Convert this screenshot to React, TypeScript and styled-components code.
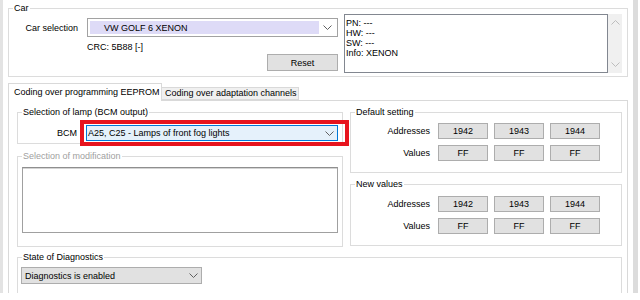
import styled, { createGlobalStyle } from "styled-components";

const GlobalStyle = createGlobalStyle`
  html, body {
    margin: 0;
    padding: 0;
    background: #ffffff;
  }

  body {
    font-family: "Liberation Sans", Arial, sans-serif;
    font-size: 9px;
    color: #000000;
  }

  * {
    box-sizing: border-box;
  }
`;

const Window = styled.div`
  width: 638px;
  height: 293px;
  overflow: hidden;
  padding: 0 5px;
  border-left: 3px solid #e3e3e3;
  border-right: 5px solid #dcdcdc;
  background: #ffffff;
`;

const GroupBox = styled.fieldset`
  margin: 0;
  padding: 0;
  min-width: 0;
  border: 1px solid #dcdcdc;
  border-radius: 0;
`;

const Legend = styled.legend<{ $disabled?: boolean }>`
  margin-left: 4px;
  padding: 0 1px;
  font-size: 9px;
  line-height: 12px;
  color: ${(p) => (p.$disabled ? "#a0a0a0" : "#000000")};
`;

const CarGroup = styled(GroupBox)`
  margin-top: 2px;
`;

const CarBody = styled.div`
  display: flex;
  padding: 0 5px 3px 8px;
`;

const SelectGrid = styled.div`
  display: grid;
  grid-template-columns: 61px 251px;
  column-gap: 9px;
  align-content: start;
  padding-top: 4px;
`;

const FieldLabel = styled.div`
  display: flex;
  align-items: center;
  justify-content: flex-end;
  white-space: nowrap;
`;

const Combo = styled.div<{ $variant: "plain" | "focus" | "button" }>`
  position: relative;
  display: flex;
  align-items: center;
  height: ${(p) => (p.$variant === "plain" ? "19px" : p.$variant === "focus" ? "16px" : "17px")};
  border: 1px solid
    ${(p) => (p.$variant === "focus" ? "#0078d7" : p.$variant === "button" ? "#adadad" : "#a2a2a2")};
  background: ${(p) =>
    p.$variant === "focus" ? "#e5f1fb" : p.$variant === "button" ? "#e1e1e1" : "#ffffff"};
  padding: ${(p) => (p.$variant === "plain" ? "2px" : "0")};
`;

const ComboText = styled.div<{ $indent: number; $fill?: string }>`
  flex: 1;
  height: 100%;
  display: flex;
  align-items: center;
  padding-left: ${(p) => p.$indent}px;
  background: ${(p) => p.$fill || "transparent"};
  white-space: nowrap;
  overflow: hidden;
`;

const ChevronBox = styled.div`
  width: 16px;
  flex: none;
  display: flex;
  align-items: center;
  justify-content: center;
`;

// red annotation frame drawn over the BCM combo
const Highlighted = styled.div`
  position: relative;

  &::after {
    content: "";
    position: absolute;
    left: -6px;
    right: -11px;
    top: -5px;
    bottom: -5px;
    border: 4px solid #e7141e;
    pointer-events: none;
  }
`;

const Crc = styled.div`
  grid-column: 2;
  margin-top: 5px;
  line-height: 10px;
`;

const ResetButton = styled.button`
  grid-column: 2;
  justify-self: end;
  margin-top: 2px;
  width: 71px;
  height: 17px;
  padding: 0;
  border: 1px solid #adadad;
  background: #e1e1e1;
  font-family: inherit;
  font-size: 9px;
  color: #000000;
`;

const InfoBox = styled.div`
  display: flex;
  margin-left: 6px;
  width: 278px;
  height: 59px;
`;

const InfoText = styled.div`
  flex: 1;
  border: 1px solid #828790;
  padding: 3px 1px 2px;
  line-height: 10px;
`;

const ScrollBar = styled.div`
  width: 14px;
  background: #f0f0f0;
  display: flex;
  flex-direction: column;
  justify-content: space-between;
  align-items: center;
  padding: 6px 0 6px;
`;

const Tabs = styled.div`
  margin-top: 6px;
`;

const TabBar = styled.div`
  display: flex;
  align-items: flex-end;
  height: 17px;
`;

const Tab = styled.div<{ $active?: boolean; $width: number }>`
  position: relative;
  z-index: ${(p) => (p.$active ? 1 : 0)};
  width: ${(p) => p.$width}px;
  height: ${(p) => (p.$active ? "18px" : "13px")};
  margin-bottom: ${(p) => (p.$active ? "-1px" : "0")};
  padding: ${(p) => (p.$active ? "2px 0 0 5px" : "0 0 0 3px")};
  line-height: ${(p) => (p.$active ? "12px" : "11px")};
  border: 1px solid #d9d9d9;
  border-bottom: ${(p) => (p.$active ? "none" : "1px solid #d9d9d9")};
  border-left: ${(p) => (p.$active ? "1px solid #d9d9d9" : "none")};
  background: ${(p) => (p.$active ? "#ffffff" : "#f0f0f0")};
  white-space: nowrap;
`;

const Panel = styled.div`
  border: 1px solid #d9d9d9;
  background: #ffffff;
  padding: 5px 5px 0 8px;
  height: 200px;
`;

const Columns = styled.div`
  display: grid;
  grid-template-columns: 326px 272px;
  column-gap: 7px;
  align-items: start;
`;

const Column = styled.div<{ $gap: number }>`
  display: flex;
  flex-direction: column;
  gap: ${(p) => p.$gap}px;
`;

const LampRow = styled.div`
  display: grid;
  grid-template-columns: 51px 252px;
  column-gap: 9px;
  padding: 7px 4px 2px 8px;
`;

const ListArea = styled.div`
  margin: 5px 4px 13px 4px;
  height: 66px;
  border: 1px solid #a0a0a0;
  border-top-color: #8f8f8f;
  box-shadow: inset 0 1px 0 #d4d4d4;
  background: #ffffff;
`;

const ValueGrid = styled.div<{ $top: number }>`
  display: grid;
  grid-template-columns: 73px 50px 50px 50px;
  grid-auto-rows: 16px;
  column-gap: 6px;
  row-gap: 6px;
  padding: ${(p) => p.$top}px 0 11px 8px;
`;

const ValueLabel = styled.div`
  display: flex;
  align-items: center;
  justify-content: flex-end;
  padding-right: 2px;
`;

const CellButton = styled.div`
  display: flex;
  align-items: center;
  justify-content: center;
  border: 1px solid #adadad;
  background: #e1e1e1;
`;

const StateGroup = styled(GroupBox)`
  margin-top: 4px;
`;

const StateBody = styled.div`
  padding: 4px 0 20px 3px;
  width: 184px;
`;

function Chevron({ up, color = "#606060" }: { up?: boolean; color?: string }) {
  return (
    <svg width="9" height="5" viewBox="0 0 9 5">
      <path
        d={up ? "M0.5 4.5 L4.5 0.5 L8.5 4.5" : "M0.5 0.5 L4.5 4.5 L8.5 0.5"}
        fill="none"
        stroke={color}
        strokeWidth="1"
      />
    </svg>
  );
}

function ValueBlock({ top, values }: { top: number; values: string[] }) {
  return (
    <ValueGrid $top={top}>
      <ValueLabel>Addresses</ValueLabel>
      <CellButton>1942</CellButton>
      <CellButton>1943</CellButton>
      <CellButton>1944</CellButton>
      <ValueLabel>Values</ValueLabel>
      {values.map((v, i) => (
        <CellButton key={i}>{v}</CellButton>
      ))}
    </ValueGrid>
  );
}

export default function App() {
  return (
    <>
      <GlobalStyle />
      <Window>
        <CarGroup>
          <Legend>Car</Legend>
          <CarBody>
            <SelectGrid>
              <FieldLabel>Car selection</FieldLabel>
              <Combo $variant="plain">
                <ComboText $indent={14} $fill="#dedbf7">
                  VW GOLF 6 XENON
                </ComboText>
                <ChevronBox>
                  <Chevron />
                </ChevronBox>
              </Combo>
              <Crc>CRC: 5B88 [-]</Crc>
              <ResetButton>Reset</ResetButton>
            </SelectGrid>
            <InfoBox>
              <InfoText>
                <div>PN: ---</div>
                <div>HW: ---</div>
                <div>SW: ---</div>
                <div>Info: XENON</div>
              </InfoText>
              <ScrollBar>
                <Chevron up color="#bdbdbd" />
                <Chevron color="#bdbdbd" />
              </ScrollBar>
            </InfoBox>
          </CarBody>
        </CarGroup>

        <Tabs>
          <TabBar>
            <Tab $active $width={154}>
              Coding over programming EEPROM
            </Tab>
            <Tab $width={137}>Coding over adaptation channels</Tab>
          </TabBar>
          <Panel>
            <Columns>
              <Column $gap={6}>
                <GroupBox>
                  <Legend>Selection of lamp (BCM output)</Legend>
                  <LampRow>
                    <FieldLabel>BCM</FieldLabel>
                    <Highlighted>
                      <Combo $variant="focus">
                        <ComboText $indent={1}>A25, C25 - Lamps of front fog lights</ComboText>
                        <ChevronBox>
                          <Chevron />
                        </ChevronBox>
                      </Combo>
                    </Highlighted>
                  </LampRow>
                </GroupBox>
                <GroupBox>
                  <Legend $disabled>Selection of modification</Legend>
                  <ListArea />
                </GroupBox>
              </Column>
              <Column $gap={5}>
                <GroupBox>
                  <Legend>Default setting</Legend>
                  <ValueBlock top={5} values={["FF", "FF", "FF"]} />
                </GroupBox>
                <GroupBox>
                  <Legend>New values</Legend>
                  <ValueBlock top={6} values={["FF", "FF", "FF"]} />
                </GroupBox>
              </Column>
            </Columns>
            <StateGroup>
              <Legend>State of Diagnostics</Legend>
              <StateBody>
                <Combo $variant="button">
                  <ComboText $indent={3}>Diagnostics is enabled</ComboText>
                  <ChevronBox>
                    <Chevron />
                  </ChevronBox>
                </Combo>
              </StateBody>
            </StateGroup>
          </Panel>
        </Tabs>
      </Window>
    </>
  );
}
